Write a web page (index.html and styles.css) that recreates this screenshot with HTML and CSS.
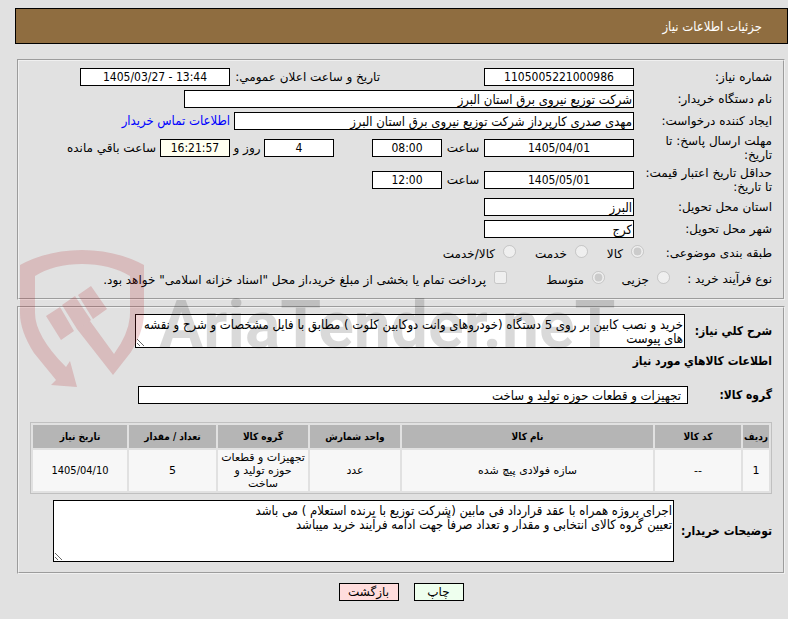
FILE: index.html
```
<!DOCTYPE html>
<html lang="fa" dir="rtl">
<head>
    <meta charset="UTF-8">
    <title>جزئیات اطلاعات نیاز</title>
    <link rel="stylesheet" href="styles.css">
</head>

<body>
    <h1 class="title-bar">جزئیات اطلاعات نیاز</h1>

    <main class="content">
        <!-- need info -->
        <section class="panel">
            <div class="row">
                <label class="caption" for="needNo">شماره نیاز:</label>
                <input class="field w150 num" id="needNo" value="1105005221000986" readonly>
                <label class="announce" for="announceDate">تاریخ و ساعت اعلان عمومي:</label>
                <input class="field w150 num" id="announceDate" value="1405/03/27 - 13:44" dir="ltr" readonly>
            </div>
            <div class="row">
                <label class="caption" for="buyer">نام دستگاه خریدار:</label>
                <input class="field w450" id="buyer" value="شرکت توزیع نیروی برق استان البرز" readonly>
            </div>
            <div class="row">
                <label class="caption" for="creator">ایجاد کننده درخواست:</label>
                <input class="field w400" id="creator" value="مهدی صدری کارپرداز شرکت توزیع نیروی برق استان البرز" readonly>
                <a class="contact" href="#">اطلاعات تماس خریدار</a>
            </div>
            <div class="row tall">
                <label class="caption" for="replyDate">مهلت ارسال پاسخ: تا تاریخ:</label>
                <input class="field w150 num" id="replyDate" value="1405/04/01" readonly>
                <label class="unit" for="replyHour">ساعت</label>
                <input class="field w70 num" id="replyHour" value="08:00" readonly>
                <input class="field w70 num days" id="days" value="4" readonly>
                <label class="unit short" for="days">روز و</label>
                <input class="field w70 num timer" id="remain" value="16:21:57" readonly>
                <label class="remain" for="remain">ساعت باقي مانده</label>
            </div>
            <div class="row tall">
                <label class="caption" for="priceDate">حداقل تاریخ اعتبار قیمت: تا تاریخ:</label>
                <input class="field w150 num" id="priceDate" value="1405/05/01" readonly>
                <label class="unit" for="priceHour">ساعت</label>
                <input class="field w70 num" id="priceHour" value="12:00" readonly>
            </div>
            <div class="row">
                <label class="caption" for="province">استان محل تحویل:</label>
                <input class="field w150" id="province" value="البرز" readonly>
            </div>
            <div class="row">
                <label class="caption" for="city">شهر محل تحویل:</label>
                <input class="field w150" id="city" value="کرج" readonly>
            </div>
            <div class="row choices">
                <span class="caption kind">طبقه بندی موضوعی:</span>
                <label class="choice goods"><input type="radio" name="kind" checked disabled><span>کالا</span></label>
                <label class="choice service"><input type="radio" name="kind" disabled><span>خدمت</span></label>
                <label class="choice"><input type="radio" name="kind" disabled><span>کالا/خدمت</span></label>
            </div>
            <div class="row choices">
                <span class="caption process">نوع فرآیند خرید :</span>
                <label class="choice minor"><input type="radio" name="process" disabled><span>جزیی</span></label>
                <label class="choice medium"><input type="radio" name="process" checked disabled><span>متوسط</span></label>
                <label class="choice"><input type="checkbox" disabled><span>پرداخت تمام یا بخشی از مبلغ خرید،از محل "اسناد خزانه اسلامی" خواهد بود.</span></label>
            </div>
        </section>

        <!-- goods info -->
        <section class="panel goods-panel">
            <div class="line">
                <label class="strong summary-label" for="summary">شرح کلي نیاز:</label>
                <textarea class="field summary" id="summary" readonly>خرید و نصب کابین بر روی 5 دستگاه (خودروهای وانت دوکابین کلوت ) مطابق با فایل مشخصات و شرح و نقشه های پیوست</textarea>
            </div>
            <h2 class="strong">اطلاعات کالاهاي مورد نیاز</h2>
            <div class="line group-line">
                <label class="strong group-label" for="group">گروه کالا:</label>
                <input class="field group" id="group" value="تجهیزات و قطعات حوزه تولید و ساخت" readonly>
            </div>
            <table class="items">
                <colgroup>
                    <col class="c-row"><col class="c-code"><col><col class="c-unit"><col class="c-group"><col class="c-qty"><col class="c-date">
                </colgroup>
                <thead>
                    <tr>
                        <th>ردیف</th>
                        <th>کد کالا</th>
                        <th>نام کالا</th>
                        <th>واحد شمارش</th>
                        <th>گروه کالا</th>
                        <th>تعداد / مقدار</th>
                        <th>تاریخ نیاز</th>
                    </tr>
                </thead>
                <tbody>
                    <tr>
                        <td>1</td>
                        <td>--</td>
                        <td>سازه فولادی پیچ شده</td>
                        <td>عدد</td>
                        <td>تجهیزات و قطعات حوزه تولید و ساخت</td>
                        <td>5</td>
                        <td class="date">1405/04/10</td>
                    </tr>
                </tbody>
            </table>
            <div class="line">
                <label class="strong notes-label" for="notes">توضیحات خریدار:</label>
                <textarea class="field notes" id="notes" readonly>اجرای پروژه همراه با عقد قرارداد فی مابین (شرکت توزیع با برنده استعلام ) می باشد
تعیین گروه کالای انتخابی و مقدار و تعداد صرفاً جهت ادامه فرآیند خرید میباشد</textarea>
            </div>
        </section>

        <div class="buttons">
            <button type="button" class="btn print">چاپ</button>
            <button type="button" class="btn back">بازگشت</button>
        </div>
    </main>

    <!-- watermark -->
    <div class="watermark" dir="ltr" aria-hidden="true">
        <svg width="125" height="138" viewBox="20 249 125 138">
            <path d="M20 265Q48 250 82 250Q116 250 144 265V313Q144 331 131 352L113 375L77 329L90 321L114 354Q130 332 130 313V276Q110 264 82 264Q54 264 35 276V313Q35 336 66 367L70 361L77 387L51 385L56 380L34 353Q20 331 20 313Z"/>
            <path d="M46 316L60 307L74 331L61 340ZM78 295L91 286L107 309L93 319ZM62 305L75 296L91 320L90 321L77 329Z"/>
        </svg>
        <span>AriaTender.neT</span>
    </div>
</body>
</html>
```
FILE: styles.css
```
*{
    box-sizing: border-box;
}
body{
    position: relative;
    margin: 0;
    padding: 8px 0 16px 15px;
    background: #e1e1e1;
    color: #000;
    font-family: Tahoma, "DejaVu Sans", sans-serif;
    font-size: 12px;
    line-height: 14px;
}
.title-bar, .field, .contact, .strong, .items th, .items .date{
    font-family: Tahoma, "DejaVu Sans Condensed", sans-serif;
}
.title-bar{
    margin: 0 0 15px;
    padding: 10px 25px;
    height: 36px;
    border: 1px solid #000;
    background: #8f6d40;
    color: #fff;
    font-size: 13px;
    font-weight: normal;
    line-height: 16px;
}
.content{
    padding: 0 3px 0 2px;
}
.panel{
    margin-bottom: 6px;
    padding: 5px 11px 6px;
    border: 2px groove #f0f0f0;
}

/* rows of the first panel */
.row{
    display: flex;
    align-items: center;
    height: 22px;
}
.row.tall{
    height: 32px;
}
.row.choices{
    height: 26px;
}
.caption{
    flex: none;
    width: 138px;
    padding-left: 10px;
}
.field{
    flex: none;
    margin: 0;
    padding: 1px;
    height: 18px;
    border: 1px solid #000;
    border-radius: 0;
    background: #fff;
    color: #000;
    font-size: 13px;
    line-height: 14px;
    outline: none;
}
.num{
    font-size: 12px;
    text-align: center;
}
.w70{
    width: 70px;
}
.w150{
    width: 150px;
}
.w400{
    width: 400px;
}
.w450{
    width: 450px;
}
.announce{
    width: 254px;
    padding-right: 104px;
    white-space: nowrap;
}
.contact{
    margin-right: 4px;
    color: #00f;
    font-size: 13px;
    text-decoration: none;
}
.unit{
    width: 42px;
    text-align: center;
    white-space: nowrap;
}
.unit.short{
    width: 34px;
}
.days{
    margin-right: 38px;
}
.timer{
    background: #fffff0;
}
.remain{
    margin-right: 4px;
}
.caption.kind{
    width: 128px;
}
.caption.process{
    width: 102px;
    padding-left: 0;
}
.choice{
    display: flex;
    flex: none;
    gap: 8px;
    white-space: nowrap;
}
.choice input{
    margin: 0;
    width: 13px;
    height: 13px;
}
.choice span{
    padding-top: 2px;
}
.goods{
    width: 56px;
}
.service{
    width: 72px;
}
.minor{
    width: 65px;
}
.medium{
    width: 98px;
}

/* second panel */
.goods-panel{
    padding: 6px 11px 10px;
}
.line{
    display: flex;
    align-items: center;
}
.strong{
    margin: 0;
    font-size: 12px;
    font-weight: bold;
    white-space: nowrap;
}
h2.strong{
    margin: 6px 0 18px;
}
.summary-label{
    width: 87px;
}
.group-label{
    width: 84px;
}
.notes-label{
    width: 98px;
}
textarea.field{
    resize: both;
    overflow: hidden;
    padding: 3px 1px;
}
.summary{
    width: 550px;
    height: 34px;
}
.group{
    width: 550px;
    padding-right: 6px;
}
.notes{
    width: 621px;
    height: 62px;
}
.items{
    width: 100%;
    margin: 18px 0 6px;
    border: 1px solid #c0c0c0;
    border-collapse: separate;
    border-spacing: 2px;
    table-layout: fixed;
    font-size: 11px;
    line-height: 13px;
    text-align: center;
}
.items th, .items td{
    padding: 1px;
}
.items th{
    height: 23px;
    background: #b5b5b5;
    font-size: 10px;
}
.items td{
    height: 41px;
    background: #f7f7f7;
}
.c-row{
    width: 26px;
}
.c-code{
    width: 86px;
}
.c-unit, .c-group{
    width: 90px;
}
.c-qty{
    width: 87px;
}
.c-date{
    width: 94px;
}
.buttons{
    display: flex;
    justify-content: center;
    gap: 15px;
    margin-top: 9px;
}
.btn{
    padding: 0;
    height: 18px;
    border: 1px solid #000;
    color: #000;
    font-family: inherit;
    font-size: 12px;
    line-height: 14px;
}
.print{
    width: 50px;
    background: #efe;
}
.back{
    width: 60px;
    background: #fdd;
}

/* logo laid over the page */
.watermark{
    position: absolute;
    top: 249px;
    left: 20px;
    display: flex;
    align-items: center;
    gap: 14px;
    pointer-events: none;
}
.watermark svg{
    fill: rgba(180, 40, 45, .2);
}
.watermark span{
    padding-top: 16px;
    color: rgba(0, 0, 0, .15);
    font-family: Roboto, "Liberation Sans", sans-serif;
    font-size: 66px;
    font-weight: bold;
    line-height: 76px;
}
```
